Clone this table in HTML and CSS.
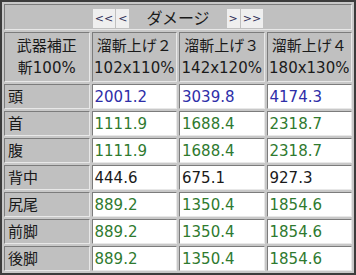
FILE: index.html
```html
<!DOCTYPE html>
<html lang="ja">
<head>
<meta charset="utf-8">
<title>ダメージ</title>
<link rel="stylesheet" href="styles.css">
</head>
<body>
<table class="dmg">
  <tr>
    <td class="title" colspan="4">
      <div class="nav">
        <span class="btn">&lt;&lt;</span><span class="btn">&lt;</span>
        <span class="label">ダメージ</span>
        <span class="btn">&gt;</span><span class="btn">&gt;&gt;</span>
      </div>
    </td>
  </tr>
  <tr class="head">
    <td class="c1">武器補正<br>斬100%</td>
    <td class="c2">溜斬上げ２<br>102x110%</td>
    <td class="c3">溜斬上げ３<br>142x120%</td>
    <td class="c4">溜斬上げ４<br>180x130%</td>
  </tr>
  <tr><th>頭</th><td class="blue">2001.2</td><td class="blue">3039.8</td><td class="blue">4174.3</td></tr>
  <tr><th>首</th><td class="green">1111.9</td><td class="green">1688.4</td><td class="green">2318.7</td></tr>
  <tr><th>腹</th><td class="green">1111.9</td><td class="green">1688.4</td><td class="green">2318.7</td></tr>
  <tr><th>背中</th><td>444.6</td><td>675.1</td><td>927.3</td></tr>
  <tr><th>尻尾</th><td class="green">889.2</td><td class="green">1350.4</td><td class="green">1854.6</td></tr>
  <tr><th>前脚</th><td class="green">889.2</td><td class="green">1350.4</td><td class="green">1854.6</td></tr>
  <tr><th>後脚</th><td class="green">889.2</td><td class="green">1350.4</td><td class="green">1854.6</td></tr>
</table>
</body>
</html>
```
FILE: styles.css
```css
html, body {
  margin: 0;
  padding: 0;
  background: #ffffff;
}

.dmg {
  width: 356px;
  box-sizing: border-box;
  table-layout: fixed;
  border-collapse: separate;
  border-spacing: 2px;
  border: 2px solid #3c3c3c;
  background: #c8c8c8;
  font-family: "DejaVu Sans", "Noto Sans CJK JP", sans-serif;
  font-size: 15px;
  color: #1a1a1a;
}

.dmg td,
.dmg th {
  box-sizing: border-box;
  height: 25px;
  padding: 0 2px;
  border: 1px solid;
  border-color: #7c7c7c #e8e8e8 #e8e8e8 #7c7c7c;
  background: #ffffff;
  text-align: left;
  font-weight: normal;
  vertical-align: middle;
  white-space: nowrap;
  line-height: 20px;
}

.dmg th {
  background: #c0c0c0;
  padding-left: 3px;
}

.dmg td.title {
  height: 26px;
  background: #c0c0c0;
  padding: 0;
  text-align: center;
}

.nav {
  display: flex;
  justify-content: center;
  align-items: center;
  gap: 1px;
}

.btn {
  display: inline-block;
  background: #efefef;
  color: #303058;
  font-family: "DejaVu Sans", sans-serif;
  font-size: 11px;
  line-height: 19px;
  height: 19px;
  padding: 0 2px;
  margin-top: 2px;
}

.label {
  font-family: "Noto Sans CJK JP", sans-serif;
  font-size: 16px;
  margin: 0 16px;
  color: #1a1a1a;
}

.head td {
  height: 50px;
  background: #c0c0c0;
  line-height: 22px;
  padding: 0 1px;
  text-align: center;
}

.head .c1 { width: 82px; }
.head .c2 { width: 86px; }
.head .c3 { width: 86px; }
.head .c4 { width: 88px; }

.blue { color: #2e2ea8; }
.green { color: #2f7a2f; }
```
